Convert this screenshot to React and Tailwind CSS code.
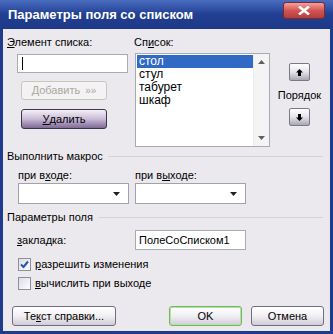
import React from "react";

const font = { fontFamily: '"Liberation Sans", Arial, sans-serif' };

function XpButton({ children, className = "", disabled, tone = "silver" }) {
  const tones = {
    silver: "border-[#6f6f82] bg-gradient-to-b from-[#ffffff] via-[#f1eff3] to-[#cfccd6]",
    purple: "border-[#3e3450] bg-gradient-to-b from-[#f4f0f7] via-[#c9bbd6] to-[#7f6a95]",
    ok: "border-[#6fb85e] bg-gradient-to-b from-[#ffffff] via-[#f1eff3] to-[#cfccd6] shadow-[inset_0_0_0_1px_#b6e2a6]",
    disabled: "border-[#c9c7ba] bg-[#f3f2f5]",
  };
  return (
    <div
      className={`flex items-center justify-center rounded-[3px] border text-[11px] leading-none ${
        disabled ? "text-[#aca899]" : "text-black"
      } ${tones[tone]} ${className}`}
    >
      {children}
    </div>
  );
}

function Combo({ className = "" }) {
  return (
    <div className={`flex h-[21px] w-[111px] items-center justify-end border border-[#a0a3aa] bg-white pr-[8px] ${className}`}>
      <svg width="7" height="4" viewBox="0 0 7 4">
        <path d="M0 0h7L3.5 4z" fill="#202020" />
      </svg>
    </div>
  );
}

function ArrowButton({ up }) {
  return (
    <div className="flex h-[18px] w-[21px] items-center justify-center rounded-[2px] border border-[#7a7a86] bg-gradient-to-b from-[#ffffff] via-[#e6e4ea] to-[#a9a7b2]">
      <svg width="7" height="7" viewBox="0 0 7 7">
        {up ? (
          <path d="M3.5 0L7 3.5H5V7H2V3.5H0z" fill="#000" />
        ) : (
          <path d="M3.5 7L7 3.5H5V0H2V3.5H0z" fill="#000" />
        )}
      </svg>
    </div>
  );
}

function Checkbox({ checked }) {
  return (
    <div className="flex h-[13px] w-[13px] items-center justify-center border border-[#8e8f9a] bg-gradient-to-br from-[#dcdce2] to-[#ffffff]">
      {checked && (
        <svg width="9" height="9" viewBox="0 0 9 9">
          <path d="M1 4.5L3.5 7L8 1.5" fill="none" stroke="#2753b8" strokeWidth="2" />
        </svg>
      )}
    </div>
  );
}

function GroupTitle({ children }) {
  return (
    <div className="flex items-center">
      <span className="text-[11px] leading-[13px]">{children}</span>
      <div className="ml-[5px] mr-[7px] h-px flex-1 bg-[#d3d3dc]" />
    </div>
  );
}

export default function App() {
  const items = ["стол", "стул", "табурет", "шкаф"];
  return (
    <div style={font} className="flex h-[334px] w-[333px] flex-col overflow-hidden bg-[#1f3c8c] text-black">
      {/* title bar */}
      <div className="flex h-[29px] justify-between bg-gradient-to-b from-[#4a6dc0] via-[#223f92] to-[#1d3987] pl-[8px] pr-[8px]">
        <span className="self-center text-[13px] font-bold leading-none text-white">
          Параметры поля со списком
        </span>
        <div className="mt-[2px] flex h-[17px] w-[42px] items-center justify-center rounded-[3px] border border-[#7d2a2a] bg-gradient-to-b from-[#f2a0a0] via-[#d25454] to-[#b83c3c]">
          <svg width="12" height="9" viewBox="0 0 12 9">
            <path d="M1 0.5L11 8.5M11 0.5L1 8.5" stroke="#fff" strokeWidth="2.6" />
          </svg>
        </div>
      </div>

      {/* body */}
      <div className="mx-[3px] mb-[3px] flex flex-1 flex-col bg-[#ebe9ed] pl-[4px] pt-[7px]">
        <div className="flex">
          {/* left column */}
          <div className="flex w-[127px] flex-col">
            <span className="text-[11px] leading-[13px]">
              <u>Э</u>лемент списка:
            </span>
            <div className="ml-[10px] mt-[5px] flex h-[19px] w-[111px] items-center border border-[#a5acb2] bg-white pl-[4px]">
              <div className="h-[13px] w-px bg-black" />
            </div>
            <XpButton disabled tone="disabled" className="ml-[14px] mt-[8px] h-[19px] w-[86px]">
              Добавить <span className="ml-[5px] text-[10px]">»»</span>
            </XpButton>
            <XpButton tone="purple" className="ml-[14px] mt-[9px] h-[20px] w-[86px]">
              <u>У</u>далить
            </XpButton>
          </div>

          {/* list column */}
          <div className="flex flex-col">
            <span className="text-[11px] leading-[13px]">
              Сп<u>и</u>сок:
            </span>
            <div className="ml-px mt-[4px] flex h-[94px] w-[135px] border border-[#a5acb2] bg-white">
              <div className="flex flex-1 flex-col pl-px pt-px">
                {items.map((it, i) => (
                  <div
                    key={it}
                    className={`h-[13px] pl-[2px] text-[12px] leading-[13px] ${
                      i === 0 ? "bg-[#316ac5] text-white" : ""
                    }`}
                  >
                    {it}
                  </div>
                ))}
              </div>
              <div className="flex w-[16px] flex-col items-center justify-between border-l border-[#ececec] bg-[#f4f4f4] py-[6px]">
                <svg width="7" height="4" viewBox="0 0 7 4">
                  <path d="M3.5 0L7 4H0z" fill="#606060" />
                </svg>
                <svg width="7" height="4" viewBox="0 0 7 4">
                  <path d="M0 0h7L3.5 4z" fill="#606060" />
                </svg>
              </div>
            </div>
          </div>

          {/* order column */}
          <div className="ml-[7px] mt-[27px] flex w-[45px] flex-col items-center">
            <ArrowButton up />
            <span className="mt-[8px] text-[11px] leading-[13px]">Порядок</span>
            <div className="mt-[6px]">
              <ArrowButton />
            </div>
          </div>
        </div>

        {/* macros */}
        <div className="mt-[3px]">
          <GroupTitle>Выполнить макрос</GroupTitle>
        </div>
        <div className="mt-[6px] flex">
          <div className="ml-[11px] flex w-[117px] flex-col">
            <span className="text-[11px] leading-[13px]">
              при в<u>х</u>оде:
            </span>
            <Combo className="mt-[1px]" />
          </div>
          <div className="flex flex-col">
            <span className="text-[11px] leading-[13px]">
              при в<u>ы</u>ходе:
            </span>
            <Combo className="mt-[1px]" />
          </div>
        </div>

        {/* field params */}
        <div className="mt-[7px]">
          <GroupTitle>Параметры поля</GroupTitle>
        </div>
        <div className="mt-[6px] flex items-center">
          <span className="ml-[10px] w-[118px] text-[11px] leading-[13px]">
            <u>з</u>акладка:
          </span>
          <div className="flex h-[20px] w-[111px] items-center border border-[#a5acb2] bg-white pl-[3px] text-[11px]">
            ПолеСоСписком1
          </div>
        </div>
        <div className="ml-[11px] mt-[8px] flex items-center gap-[4px]">
          <Checkbox checked />
          <span className="text-[11px] leading-[13px]">
            <u>р</u>азрешить изменения
          </span>
        </div>
        <div className="ml-[11px] mt-[6px] flex items-center gap-[4px]">
          <Checkbox />
          <span className="text-[11px] leading-[13px]">
            <u>в</u>ычислить при выходе
          </span>
        </div>

        {/* buttons */}
        <div className="mt-[16px] flex">
          <XpButton className="ml-[5px] h-[20px] w-[104px]">
            Те<u>к</u>ст справки...
          </XpButton>
          <XpButton tone="ok" className="ml-[53px] h-[20px] w-[73px]">
            OK
          </XpButton>
          <XpButton className="ml-[9px] h-[20px] w-[73px]">Отмена</XpButton>
        </div>
      </div>
    </div>
  );
}
